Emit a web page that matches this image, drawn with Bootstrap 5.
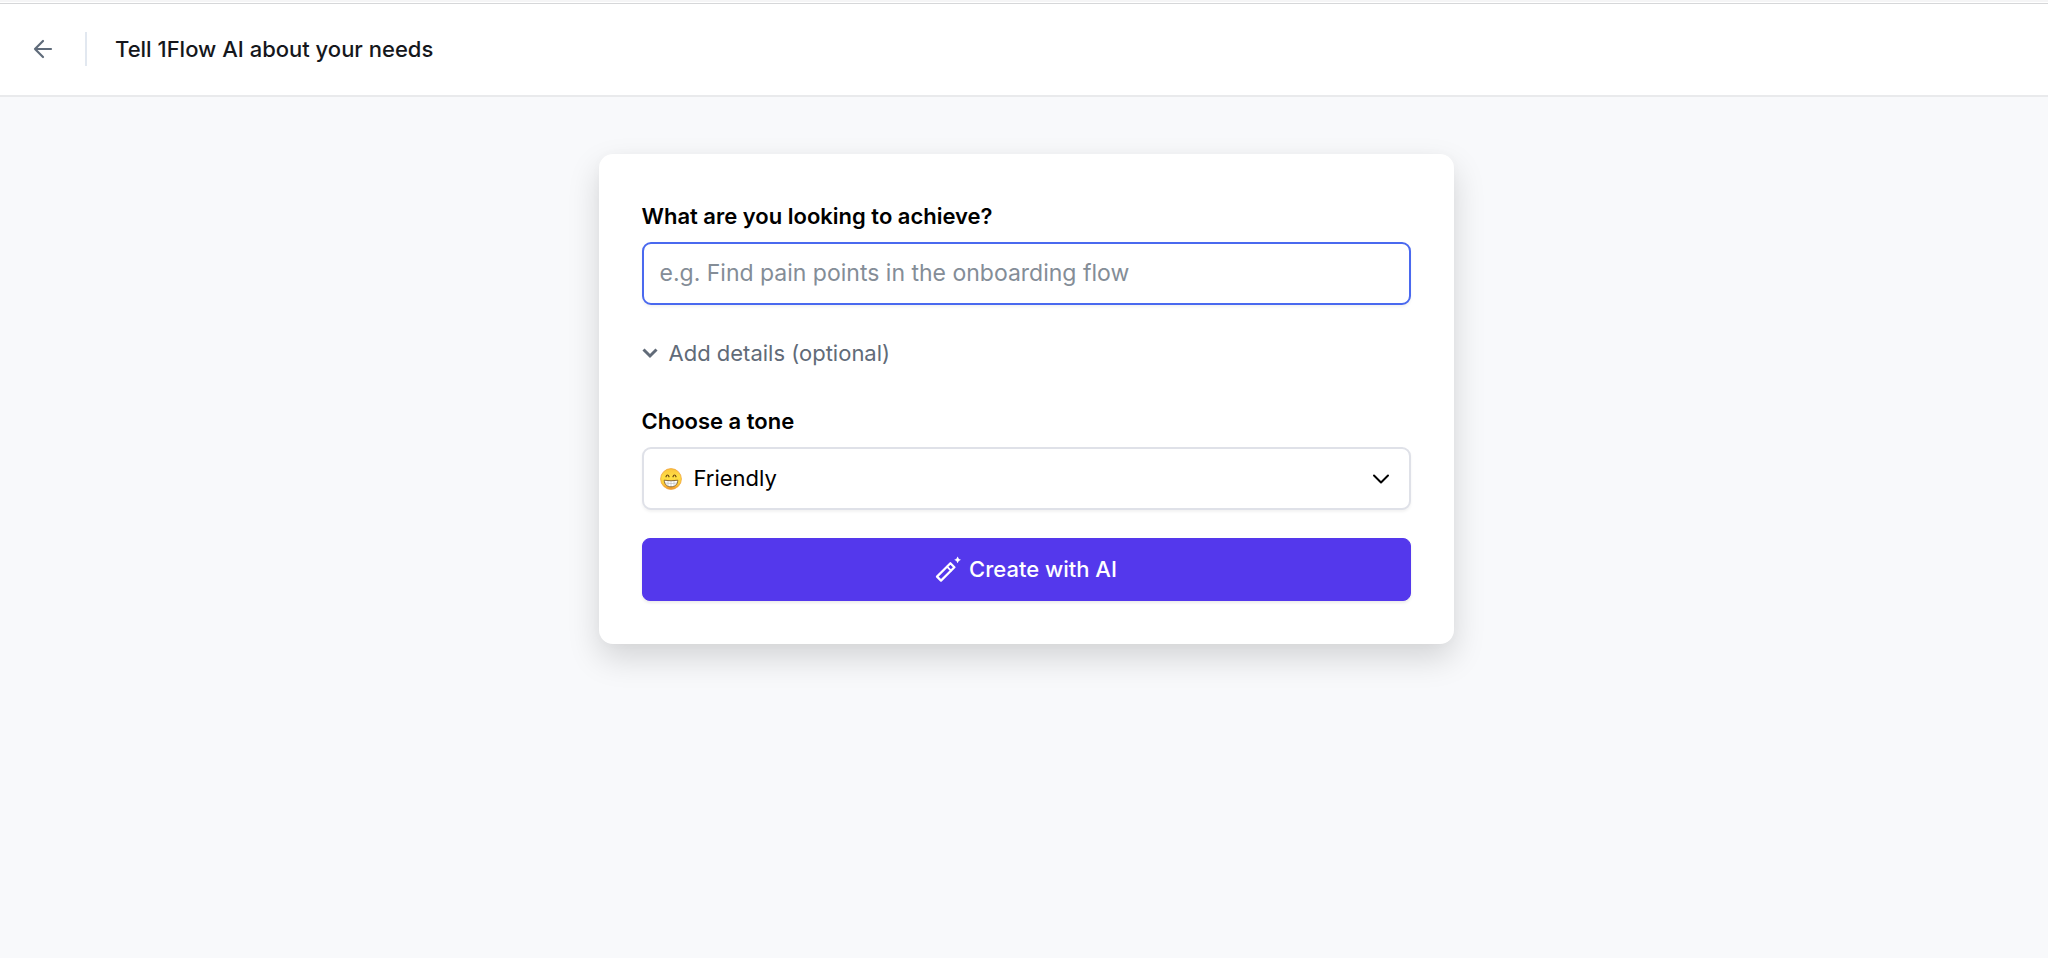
<!DOCTYPE html>
<html lang="en">
<head>
<meta charset="utf-8">
<meta name="viewport" content="width=device-width, initial-scale=1">
<title>Tell 1Flow AI about your needs</title>
<link href="https://cdn.jsdelivr.net/npm/bootstrap@5.3.0/dist/css/bootstrap.min.css" rel="stylesheet">
<style>
  body {
    font-family: Inter, "Liberation Sans", sans-serif;
    font-size: 22px;
    line-height: 32px;
    color: #000;
    background: #f8f9fb;
  }
  .topbar {
    border-top: 1px solid #d6d7d9;
    border-bottom: 2px solid #e9eaec;
    padding: 28px 32px 29px;
    margin-top: 3px;
  }
  .topbar-wrap { box-shadow: inset 0 2px #f5f5f6; }
  .back-link { color: #5f6b7a; }
  .divider { width: 2px; height: 34px; margin: 0 28px 0 31px; background: #e2e8f0; }
  .page-title { font-size: 22px; line-height: 34px; font-weight: 500; color: #15171c; }
  .flow-card {
    max-width: 855px;
    margin-top: 57px;
    padding: 44px 43px 43px;
    border-radius: 14px;
    box-shadow: 0 14px 32px rgba(0, 0, 0, .15), 0 0 12px rgba(0, 0, 0, .02);
  }
  .field-label { font-weight: 600; line-height: 36px; margin-bottom: 8px; }
  .field {
    height: 63px;
    padding: 0 16px 2px;
    font-size: 23px;
    line-height: 32px;
    border: 2px solid #dfe1e8;
    border-radius: 9px;
    color: #000;
    background-color: #fff;
    box-shadow: 0 2px 3px rgba(0, 0, 0, .05);
  }
  .field-goal, .field-goal:focus { border-color: #4a69ef; box-shadow: 0 2px 3px rgba(0, 0, 0, .05); }
  .field-goal::placeholder { color: #848d97; opacity: 1; }
  .field-tone { padding-left: 50px; font-size: 22px; background-image: none; }
  .details-toggle { color: #616b78; font-size: 22px; line-height: 36px; gap: 11px; margin: 30px 0 32px; }
  .tone-emoji { left: 18px; }
  .tone-arrow { right: 21px; }
  .btn-create {
    --bs-btn-color: #fff;
    --bs-btn-bg: #5438ec;
    --bs-btn-border-color: #5438ec;
    --bs-btn-hover-color: #fff;
    --bs-btn-hover-bg: #4629dc;
    height: 63px;
    margin-top: 28px;
    padding: 0 16px 2px;
    font-size: 22px;
    font-weight: 500;
    line-height: 32px;
    border-radius: 8px;
    gap: 8px;
    box-shadow: 0 2px 3px rgba(0, 0, 0, .08);
  }
</style>
</head>
<body class="min-vh-100">
<header class="topbar-wrap bg-white d-flex">
  <div class="topbar d-flex align-items-center flex-grow-1">
    <a href="#" class="back-link d-flex" aria-label="Back">
      <svg width="22" height="22" viewBox="0 0 22 22" fill="none" stroke="currentColor" stroke-width="2.2" stroke-linecap="round" stroke-linejoin="round"><path d="M19 11H3M11 3L3 11l8 8"/></svg>
    </a>
    <div class="divider"></div>
    <h1 class="page-title mb-0">Tell 1Flow AI about your needs</h1>
  </div>
</header>

<main class="container-fluid ps-3">
  <form class="flow-card bg-white mx-auto">
    <label for="goal" class="field-label d-block">What are you looking to achieve?</label>
    <input id="goal" type="text" class="form-control field field-goal" placeholder="e.g. Find pain points in the onboarding flow">

    <button type="button" class="details-toggle btn p-0 border-0 d-flex align-items-center">
      <svg width="16" height="16" viewBox="0 0 16 16" fill="none" stroke="currentColor" stroke-width="3"><path d="M1.500 4.500L8 11 14.500 4.500"/></svg>
      Add details (optional)
    </button>

    <label for="tone" class="field-label d-block">Choose a tone</label>
    <div class="position-relative">
      <select id="tone" class="form-select field field-tone">
        <option>Friendly</option>
      </select>
      <svg class="tone-emoji position-absolute top-50 translate-middle-y pe-none" width="22" height="22" viewBox="0 0 22 22">
        <defs>
          <linearGradient id="face" x1="0" y1="0" x2="0" y2="1"><stop offset="0" stop-color="#fbc43c"/><stop offset=".4" stop-color="#fee045"/><stop offset=".7" stop-color="#fdd03a"/><stop offset="1" stop-color="#f0922a"/></linearGradient>
        </defs>
        <circle cx="11" cy="11" r="10.4" fill="url(#face)" stroke="#f0a238" stroke-width=".8"/>
        <path d="M6 8.800C6.800 6.400 8.200 6.400 9 8.800M13 8.800c.8-2.400 2.200-2.400 3 0" fill="none" stroke="#6b4410" stroke-width="1.200" stroke-linecap="round"/>
        <path d="M4.200 12.200Q11 13.400 17.800 12.200C17.600 16.600 14.800 18.800 11 18.800S4.400 16.600 4.200 12.200Z" fill="#fff" stroke="#7c5a2c" stroke-width=".9"/>
        <path d="M5 15Q11 16.200 17 15M8 12.800v5.200M11 13v5.500M14 12.800v5.200" fill="none" stroke="#a9a9a9" stroke-width=".5"/>
      </svg>
      <svg class="tone-arrow position-absolute top-50 translate-middle-y pe-none" width="18" height="18" viewBox="0 0 18 18" fill="none" stroke="#000" stroke-width="2" stroke-linecap="round" stroke-linejoin="round"><path d="M2 5.500l7 7 7-7"/></svg>
    </div>

    <button type="submit" class="btn btn-create w-100 d-flex align-items-center justify-content-center">
      <svg width="26" height="26" viewBox="0 0 26 26" fill="none" stroke="#fff" stroke-width="2.2" stroke-linejoin="round" stroke-linecap="round">
        <path d="M2 20.600L15.400 7.200 19.400 11.200 6 24.600Z"/>
        <path d="M12 10.600l4 4" stroke-width="1.800"/>
        <path d="M22.600.4q.7 2.700 3.400 3.400-2.700.7-3.400 3.400-.7-2.700-3.400-3.400 2.700-.7 3.400-3.400Z" fill="#fff" stroke="none"/>
      </svg>
      Create with AI
    </button>
  </form>
</main>
<script src="https://cdn.jsdelivr.net/npm/bootstrap@5.3.0/dist/js/bootstrap.bundle.min.js"></script>
</body>
</html>
